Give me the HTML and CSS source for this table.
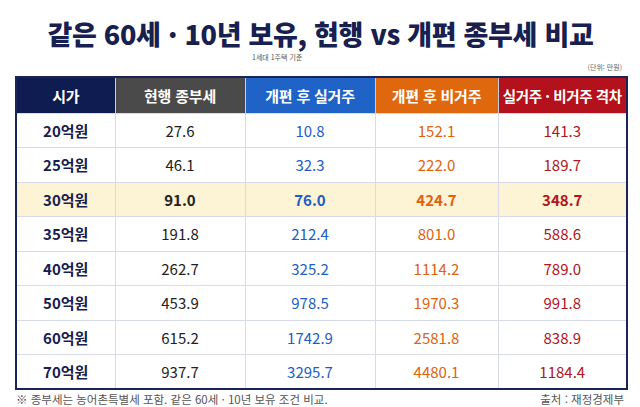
FILE: index.html
```html
<!DOCTYPE html>
<html lang="ko">
<head>
<meta charset="utf-8">
<link rel="stylesheet" href="styles.css">
</head>
<body>
<div class="page">
  <h1 class="title">같은 60세 · 10년 보유, 현행 vs 개편 종부세 비교</h1>
  <div class="sub">1세대 1주택 기준</div>
  <div class="unit">(단위: 만원)</div>
  <table class="tbl">
    <colgroup>
      <col class="c1"><col class="c2"><col class="c3"><col class="c4"><col class="c5">
    </colgroup>
    <thead>
      <tr>
        <th class="h-price">시가</th>
        <th class="h-cur">현행 종부세</th>
        <th class="h-real">개편 후 실거주</th>
        <th class="h-non">개편 후 비거주</th>
        <th class="h-gap">실거주 · 비거주 격차</th>
      </tr>
    </thead>
    <tbody>
      <tr><td class="price">20억원</td><td class="cur">27.6</td><td class="real">10.8</td><td class="non">152.1</td><td class="gap">141.3</td></tr>
      <tr><td class="price">25억원</td><td class="cur">46.1</td><td class="real">32.3</td><td class="non">222.0</td><td class="gap">189.7</td></tr>
      <tr class="hl"><td class="price">30억원</td><td class="cur">91.0</td><td class="real">76.0</td><td class="non">424.7</td><td class="gap">348.7</td></tr>
      <tr><td class="price">35억원</td><td class="cur">191.8</td><td class="real">212.4</td><td class="non">801.0</td><td class="gap">588.6</td></tr>
      <tr><td class="price">40억원</td><td class="cur">262.7</td><td class="real">325.2</td><td class="non">1114.2</td><td class="gap">789.0</td></tr>
      <tr><td class="price">50억원</td><td class="cur">453.9</td><td class="real">978.5</td><td class="non">1970.3</td><td class="gap">991.8</td></tr>
      <tr><td class="price">60억원</td><td class="cur">615.2</td><td class="real">1742.9</td><td class="non">2581.8</td><td class="gap">838.9</td></tr>
      <tr><td class="price">70억원</td><td class="cur">937.7</td><td class="real">3295.7</td><td class="non">4480.1</td><td class="gap">1184.4</td></tr>
    </tbody>
  </table>
  <div class="foot">
    <span class="note">※ 종부세는 농어촌특별세 포함. 같은 60세 · 10년 보유 조건 비교.</span>
    <span class="src">출처 : 재정경제부</span>
  </div>
</div>
</body>
</html>
```
FILE: styles.css
```css
* { box-sizing: border-box; }
html, body { margin: 0; padding: 0; background: #ffffff; }
body {
  font-family: "Noto Sans CJK KR", "Noto Sans", sans-serif;
  width: 640px;
  height: 407px;
  overflow: hidden;
}
.page {
  display: flex;
  flex-direction: column;
  padding: 19px 14px 0 15px;
}
.title {
  margin: 0;
  font-size: 27px;
  line-height: 30px;
  font-weight: 900;
  color: #17204f;
  text-align: center;
  letter-spacing: -0.3px;
}
.sub {
  font-size: 7px;
  line-height: 9px;
  color: #555;
  padding-left: 237px;
  margin-top: 4px;
}
.unit {
  font-size: 7px;
  line-height: 9px;
  color: #666;
  text-align: right;
  margin-top: 1px;
  padding-right: 4px;
}
.tbl {
  margin-top: 4px;
  width: 611px;
  border-collapse: collapse;
  table-layout: fixed;
  border: 2px solid #1b2456;
}
.c1 { width: 99px; }
.c2 { width: 130px; }
.c3 { width: 130px; }
.c4 { width: 123px; }
.c5 { width: 129px; }
th {
  height: 36px;
  color: #ffffff;
  font-size: 15px;
  font-weight: 700;
  text-align: center;
  padding: 0;
  border-left: 1px solid #c9ccd9;
  letter-spacing: -0.2px;
}
th:first-child { border-left: none; }
.h-price { background: #0e1c52; }
.h-cur { background: #4a4a4a; }
.h-real { background: #1f63c6; }
.h-non { background: #df680f; }
.h-gap { background: #b3121c; font-size: 14.5px; letter-spacing: -0.4px; }
td {
  height: 34.5px;
  padding: 0;
  text-align: center;
  font-size: 15px;
  border: 1px solid #d8dbe9;
  background: #ffffff;
}
.price { color: #17204f; font-weight: 700; }
.cur { color: #222222; }
.real { color: #1d5dc4; }
.non { color: #e0620f; }
.gap { color: #b0161e; }
.hl td { background: #fdf3d5; font-weight: 700; }
.foot {
  display: flex;
  justify-content: space-between;
  align-items: center;
  margin-top: 2px;
  font-size: 11.5px;
  line-height: 15px;
  color: #555555;
  padding-left: 1px;
  padding-right: 2px;
}
```
